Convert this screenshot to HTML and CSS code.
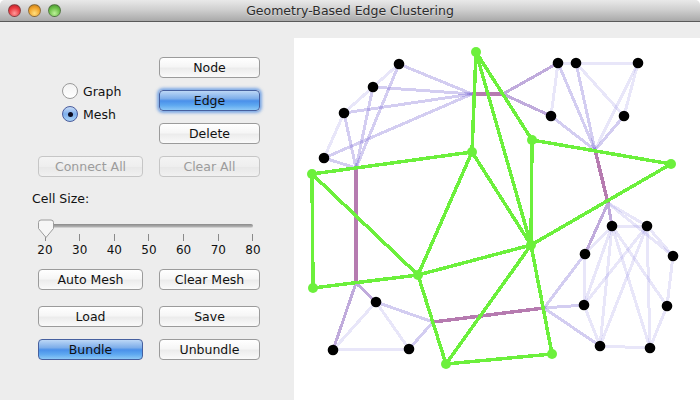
FILE: index.html
```html
<!DOCTYPE html>
<html lang="en">
<head>
<meta charset="utf-8">
<title>Geometry-Based Edge Clustering</title>
<link rel="stylesheet" href="styles.css">
</head>
<body>
<div class="window">
  <header class="titlebar">
    <div class="lights">
      <span class="light red"></span>
      <span class="light yellow"></span>
      <span class="light green"></span>
    </div>
    <div class="title">Geometry-Based Edge Clustering</div>
  </header>
  <div class="content">
    <aside class="panel">
      <div class="grid">
        <div class="radios">
          <div class="radio-row"><span class="radio"></span><span>Graph</span></div>
          <div class="radio-row"><span class="radio on"></span><span>Mesh</span></div>
        </div>
        <button class="btn col2">Node</button>
        <button class="btn col2 primary focus">Edge</button>
        <button class="btn col2">Delete</button>
        <button class="btn off">Connect All</button>
        <button class="btn off">Clear All</button>
      </div>
      <div class="cell-label">Cell Size:</div>
      <div class="slider">
        <div class="track"></div>
        <svg class="thumb" width="18" height="20" viewBox="0 0 18 20"><path d="M1.5 3.5Q1.5 1 4 1H14Q16.500 1 16.500 3.500V9.500L9 18.500L1.500 9.500Z" fill="#f6f6f6" stroke="#9c9c9c"/></svg>
        <div class="ticks">
          <div class="tick"><i></i><span>20</span></div>
          <div class="tick"><i></i><span>30</span></div>
          <div class="tick"><i></i><span>40</span></div>
          <div class="tick"><i></i><span>50</span></div>
          <div class="tick"><i></i><span>60</span></div>
          <div class="tick"><i></i><span>70</span></div>
          <div class="tick"><i></i><span>80</span></div>
        </div>
      </div>
      <div class="grid mesh-row">
        <button class="btn">Auto Mesh</button>
        <button class="btn">Clear Mesh</button>
      </div>
      <div class="grid file-rows">
        <button class="btn">Load</button>
        <button class="btn">Save</button>
        <button class="btn primary">Bundle</button>
        <button class="btn">Unbundle</button>
      </div>
    </aside>
    <main class="canvas">
      <svg class="graph" width="406" height="362" viewBox="294 38 406 362">
        <g class="light-e">
          <path d="M399 64L373 87"/><path d="M373 87L344 113"/><path d="M344 113L324 158"/>
          <path d="M558 63L576 63"/><path d="M576 63L638 63"/><path d="M558 63L551 116"/>
          <path d="M576 63L624 116"/><path d="M638 63L624 116"/><path d="M638 63L595 150"/>
          <path d="M376 302L333 350"/><path d="M376 302L409 349"/><path d="M333 350L409 349"/>
          <path d="M608 203L647 226"/><path d="M608 203L673 256"/>
          <path d="M612 226L647 226"/><path d="M612 226L585 254"/><path d="M612 226L584 305"/>
          <path d="M612 226L600 346"/><path d="M612 226L650 348"/><path d="M612 226L667 306"/>
          <path d="M647 226L584 305"/><path d="M647 226L600 346"/><path d="M647 226L650 348"/>
          <path d="M647 226L673 256"/><path d="M673 256L667 306"/><path d="M667 306L650 348"/>
          <path d="M600 346L650 348"/><path d="M584 305L600 346"/><path d="M585 254L584 305"/>
        </g>
        <g class="mid-e">
          <path d="M399 64L472 94"/><path d="M373 87L472 94"/><path d="M344 113L472 94"/><path d="M324 158L472 94"/>
          <path d="M324 158L356 168"/><path d="M344 113L356 168"/><path d="M373 87L356 168"/><path d="M399 64L356 168"/>
          <path d="M558 63L595 150"/><path d="M576 63L595 150"/><path d="M551 116L595 150"/><path d="M624 116L595 150"/>
          <path d="M585 254L544 308"/><path d="M584 305L544 308"/><path d="M600 346L544 308"/>
          <path d="M376 302L433 322"/><path d="M409 349L433 322"/>
        </g>
        <g class="dark-e">
          <path d="M558 63L503 94"/><path d="M551 116L503 94"/>
          <path d="M356 283L333 350"/><path d="M356 283L376 302"/>
          <path d="M608 203L585 254"/><path d="M608 203L612 226"/>
        </g>
        <g class="bundle-e">
          <path d="M356 168L356 283"/><path d="M472 94L503 94"/>
          <path d="M595 150L608 203"/><path d="M433 322L544 308"/>
        </g>
        <g class="mesh-e">
          <path d="M476 52L472 152"/><path d="M476 52L532 140"/><path d="M476 52L531 245"/>
          <path d="M472 152L312 174"/><path d="M472 152L418 275"/><path d="M472 152L531 245"/>
          <path d="M312 174L313 288"/><path d="M312 174L418 275"/><path d="M313 288L418 275"/>
          <path d="M418 275L531 245"/><path d="M418 275L446 364"/><path d="M446 364L531 245"/>
          <path d="M446 364L552 354"/><path d="M531 245L552 354"/><path d="M532 140L531 245"/>
          <path d="M532 140L671 164"/><path d="M671 164L531 245"/>
        </g>
        <g class="mesh-n">
          <circle cx="476" cy="52" r="5"/><circle cx="472" cy="152" r="5"/><circle cx="312" cy="174" r="5"/>
          <circle cx="532" cy="140" r="5"/><circle cx="671" cy="164" r="5"/><circle cx="531" cy="245" r="5"/>
          <circle cx="313" cy="288" r="5"/><circle cx="418" cy="275" r="5"/><circle cx="446" cy="364" r="5"/>
          <circle cx="552" cy="354" r="5"/>
        </g>
        <g class="node-n">
          <circle cx="399" cy="64" r="5.300"/><circle cx="373" cy="87" r="5.300"/><circle cx="344" cy="113" r="5.300"/><circle cx="324" cy="158" r="5.300"/>
          <circle cx="558" cy="63" r="5.300"/><circle cx="576" cy="63" r="5.300"/><circle cx="638" cy="63" r="5.300"/><circle cx="551" cy="116" r="5.300"/><circle cx="624" cy="116" r="5.300"/>
          <circle cx="376" cy="302" r="5.300"/><circle cx="333" cy="350" r="5.300"/><circle cx="409" cy="349" r="5.300"/>
          <circle cx="612" cy="226" r="5.300"/><circle cx="647" cy="226" r="5.300"/><circle cx="673" cy="256" r="5.300"/><circle cx="585" cy="254" r="5.300"/>
          <circle cx="584" cy="305" r="5.300"/><circle cx="667" cy="306" r="5.300"/><circle cx="600" cy="346" r="5.300"/><circle cx="650" cy="348" r="5.300"/>
        </g>
      </svg>
    </main>
  </div>
</div>
</body>
</html>
```
FILE: styles.css
```css
* { box-sizing: border-box; }
html, body { margin: 0; height: 100%; background: #fff; }
body { font-family: "DejaVu Sans", sans-serif; font-size: 12.500px; color: #111; overflow: hidden; }
.window { width: 700px; height: 400px; display: flex; flex-direction: column; background: #ededed; border-radius: 5px 5px 0 0; overflow: hidden; }

.titlebar { height: 22px; flex: none; display: flex; align-items: center; justify-content: center; position: relative; background: linear-gradient(#e9e9e9, #d0d0d0 45%, #a9a9a9); border-bottom: 1px solid #5a5a5a; }
.title { font-size: 12.500px; color: #2c2c2c; text-shadow: 0 1px 0 rgba(255,255,255,.4); }
.lights { position: absolute; left: 8px; top: 4px; display: flex; gap: 7px; }
.light { width: 13px; height: 13px; border-radius: 50%; border: 1px solid rgba(70,70,70,.55); }
.red { background: radial-gradient(circle at 50% 75%, #ff9a9a, #ea3a40 55%, #b31c24); }
.yellow { background: radial-gradient(circle at 50% 75%, #ffdf80, #f2a52c 55%, #bb7412); }
.green { background: radial-gradient(circle at 50% 75%, #bdf09a, #6cc048 55%, #3f8a2a); }

.content { flex: 1; display: flex; min-height: 0; }
.panel { width: 294px; flex: none; padding: 35px 0 0 38px; display: flex; flex-direction: column; }
.canvas { flex: 1; margin-top: 16px; background: #fff; }
.graph { display: block; }

.grid { display: grid; grid-template-columns: 105px 101px; column-gap: 16px; row-gap: 12px; grid-auto-rows: 21px; }
.col2 { grid-column: 2; }
.mesh-row { margin-top: 10px; }
.file-rows { margin-top: 16px; }

.btn { font: inherit; color: #111; padding: 0; height: 21px; border: 1px solid #9b9b9b; border-radius: 4px; background: linear-gradient(#fff, #f6f6f6 45%, #ececec 55%, #fafafa); }
.primary { border-color: #46609f; background: linear-gradient(#bcd7f6, #7eaeea 40%, #4a90ea 52%, #5ea8f0 75%, #8cc8f6); }
.focus { box-shadow: 0 0 3px 2px rgba(88,146,226,.75); }
.off { color: #9c9c9c; border-color: #c6c6c6; background: linear-gradient(#f4f4f4, #eeeeee 50%, #e8e8e8 55%, #f1f1f1); }

.radios { grid-column: 1; grid-row: 1 / 4; margin: 26px 0 0 24px; display: flex; flex-direction: column; gap: 7px; }
.radio-row { display: flex; align-items: center; gap: 5px; height: 16px; }
.radio { width: 16px; height: 16px; border-radius: 50%; border: 1px solid #9a9a9a; background: linear-gradient(#f2f2f2, #fff); flex: none; position: relative; }
.radio.on { border-color: #4a5c9c; background: linear-gradient(#c6daf6, #7fb0ec 50%, #a8d2f6); }
.radio.on::after { content: ""; position: absolute; left: 4.500px; top: 4.500px; width: 5px; height: 5px; border-radius: 50%; background: #0c0c20; }

.cell-label { margin: 14px 0 0 -6px; height: 15px; line-height: 15px; }
.slider { position: relative; width: 222px; margin-top: 13px; padding: 5px 7px 0; height: 40px; }
.track { height: 4px; border-radius: 2px; background: linear-gradient(#8a8a8a, #b4b4b4); border-bottom: 1px solid #d0d0d0; }
.thumb { position: absolute; left: -1px; top: 0; }
.ticks { display: flex; justify-content: space-between; margin-top: 6px; }
.tick { width: 0; display: flex; flex-direction: column; align-items: center; font-size: 12px; line-height: 14px; }
.tick i { display: block; width: 1px; height: 7px; flex: none; background: #8a8a8a; margin-bottom: 2px; }

.graph path { fill: none; shape-rendering: crispEdges; }
.light-e path { stroke: rgba(110,100,220,.16); stroke-width: 3; }
.mid-e path { stroke: rgba(110,90,210,.30); stroke-width: 3; }
.dark-e path { stroke: #c0abdc; stroke-width: 3; }
.bundle-e path { stroke: #b67bb0; stroke-width: 3.500; }
.mesh-e path { stroke: #6cf03c; stroke-width: 3.500; }
.mesh-n circle { fill: #6cf03c; }
.node-n circle { fill: #000; }
```
